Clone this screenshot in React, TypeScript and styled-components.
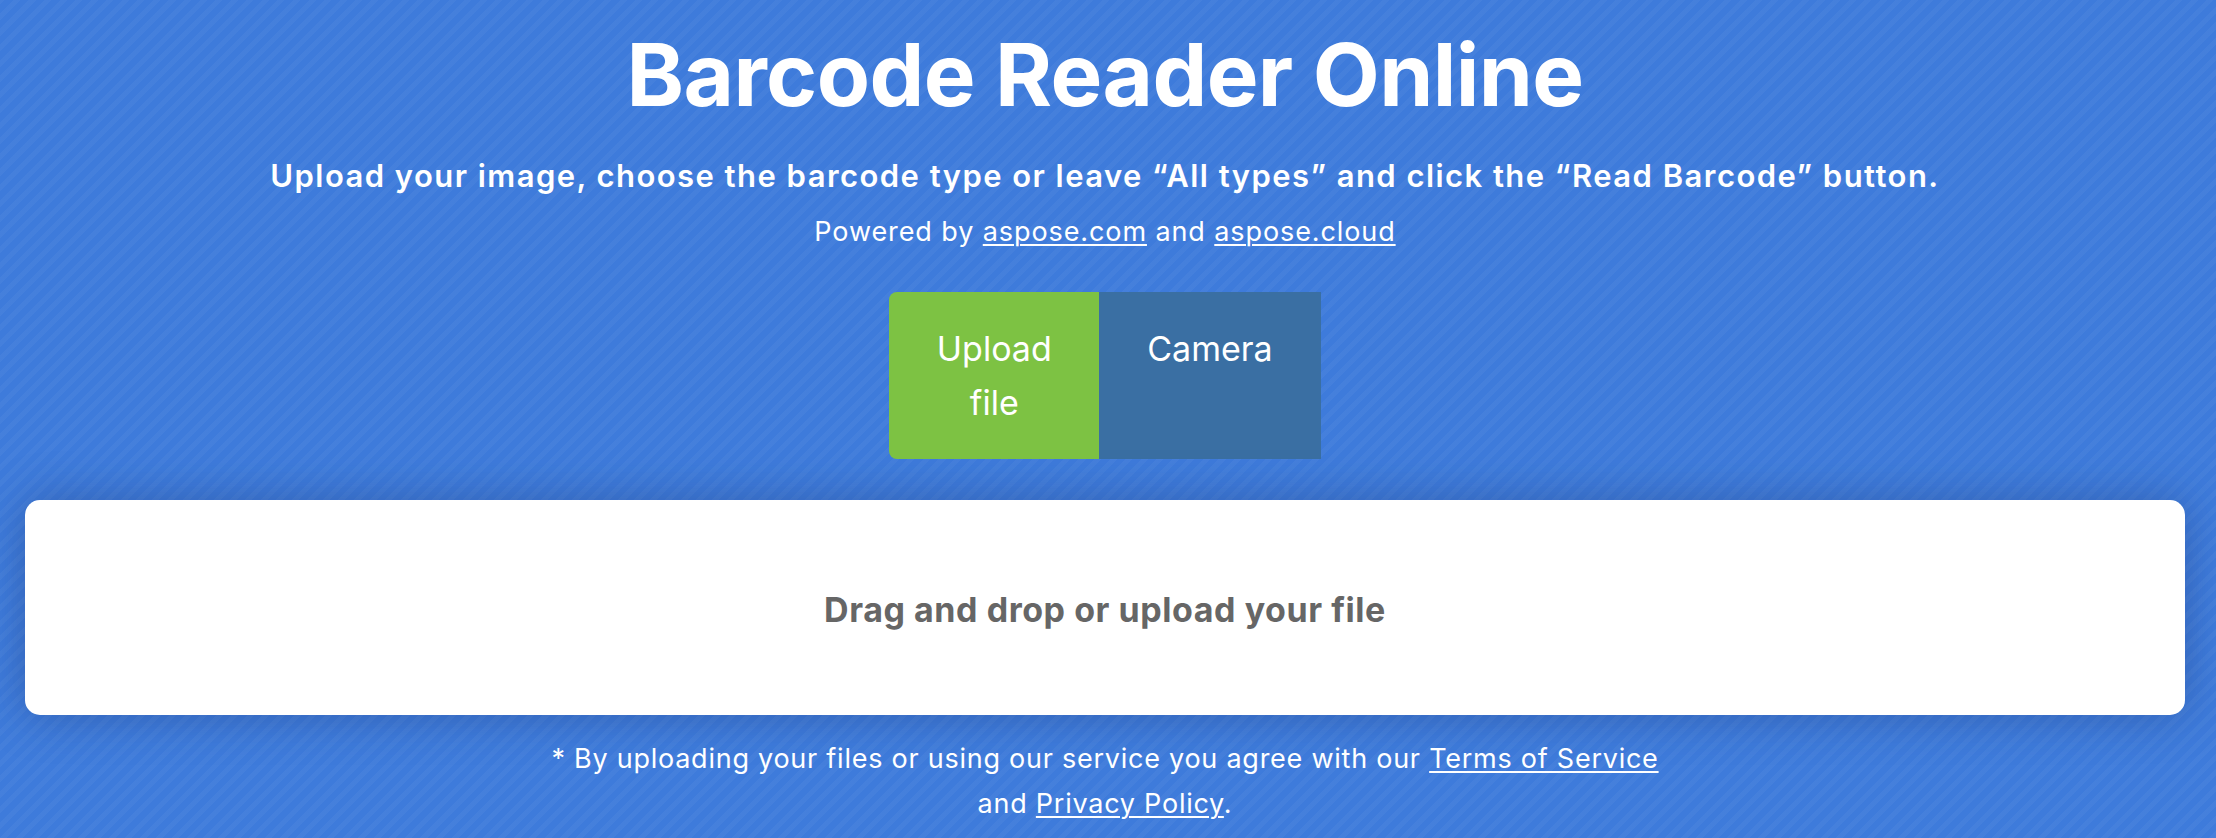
import React from "react";
import styled, { createGlobalStyle } from "styled-components";

const GlobalStyle = createGlobalStyle`
  html, body {
    margin: 0;
    padding: 0;
  }
  body {
    font-family: Inter, "Noto Sans", "Liberation Sans", sans-serif;
    background-color: #3e7bdb;
    background-image: repeating-linear-gradient(
      -45deg,
      rgba(255, 255, 255, 0.035) 0px,
      rgba(255, 255, 255, 0.035) 5px,
      rgba(0, 0, 0, 0.0) 5px,
      rgba(0, 0, 0, 0.0) 11px
    );
    min-height: 838px;
    color: #fff;
  }
`;

const Page = styled.main`
  display: flex;
  flex-direction: column;
  align-items: center;
  padding: 23px 31px 0 25px;
  min-height: 838px;
  box-sizing: border-box;
`;

const Title = styled.h1`
  margin: 0;
  font-size: 87px;
  line-height: 104px;
  font-weight: 700;
  letter-spacing: -0.6px;
  text-align: center;
`;

const Subtitle = styled.p`
  margin: 29px 0 0;
  font-size: 31px;
  line-height: 40px;
  font-weight: 600;
  letter-spacing: 1.45px;
  text-align: center;
`;

const Powered = styled.p`
  margin: 18px 0 0;
  font-size: 27px;
  line-height: 36px;
  font-weight: 400;
  letter-spacing: 0.9px;
  text-align: center;
`;

const Link = styled.a`
  color: #fff;
  text-decoration: underline;
  text-underline-offset: 3px;
  text-decoration-thickness: 2px;
`;

const ModeSwitch = styled.div`
  display: flex;
  margin-top: 42px;
`;

const ModeButton = styled.button<{ $active?: boolean; $width?: number }>`
  box-sizing: border-box;
  display: flex;
  align-items: flex-start;
  justify-content: center;
  ${(p) => (p.$width ? `width: ${p.$width}px;` : "")}
  padding: 30px ${(p) => (p.$active ? 40 : 48)}px 29px;
  border: none;
  border-radius: ${(p) => (p.$active ? "8px 0 0 8px" : "0")};
  background: ${(p) => (p.$active ? "#7dc243" : "#3a6fa3")};
  color: #fff;
  font-family: inherit;
  font-size: 34px;
  line-height: 54px;
  font-weight: 400;
  text-align: center;
  cursor: pointer;
`;

const DropZone = styled.section`
  box-sizing: border-box;
  align-self: stretch;
  margin-top: 41px;
  height: 215px;
  padding-top: 88px;
  background: #fff;
  border-radius: 15px;
  box-shadow: 0 0 45px rgba(25, 45, 100, 0.35);
  text-align: center;
`;

const DropText = styled.div`
  color: #666;
  font-size: 34px;
  line-height: 44px;
  font-weight: 700;
  letter-spacing: 0.55px;
`;

const Footer = styled.p`
  margin: 21px 0 0;
  font-size: 27px;
  line-height: 45px;
  letter-spacing: 0.75px;
  text-align: center;
`;

export default function App() {
  return (
    <>
      <GlobalStyle />
      <Page>
        <Title>Barcode Reader Online</Title>
        <Subtitle>
          Upload your image, choose the barcode type or leave “All types” and click the “Read Barcode” button.
        </Subtitle>
        <Powered>
          Powered by <Link href="#">aspose.com</Link> and <Link href="#">aspose.cloud</Link>
        </Powered>
        <ModeSwitch>
          <ModeButton $active $width={210}>Upload file</ModeButton>
          <ModeButton>Camera</ModeButton>
        </ModeSwitch>
        <DropZone>
          <DropText>Drag and drop or upload your file</DropText>
        </DropZone>
        <Footer>
          * By uploading your files or using our service you agree with our{" "}
          <Link href="#">Terms of Service</Link>
          <br />
          and <Link href="#">Privacy Policy</Link>.
        </Footer>
      </Page>
    </>
  );
}
